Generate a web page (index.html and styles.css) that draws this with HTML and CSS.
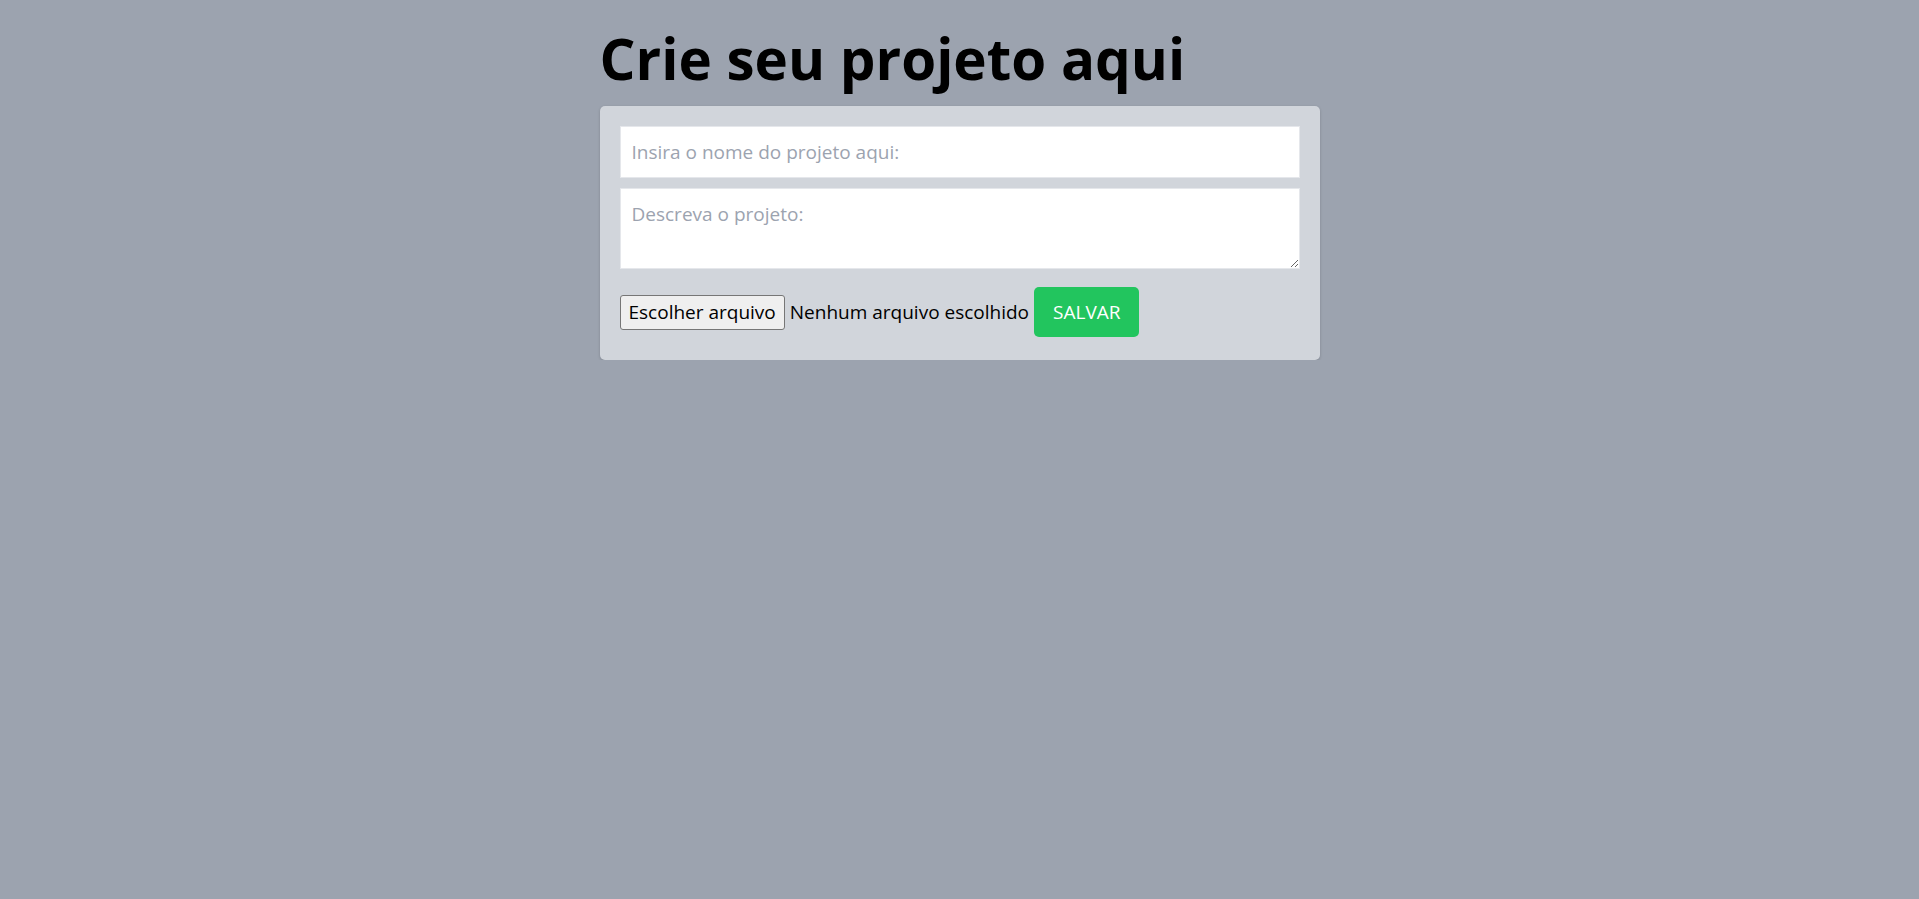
FILE: index.html
```html
<!DOCTYPE html>
<html lang="pt-BR">
<head>
<meta charset="utf-8">
<title>Crie seu projeto aqui</title>
<link rel="stylesheet" href="styles.css">
</head>
<body>
<main class="page">
  <h1 class="title">Crie seu projeto aqui</h1>
  <form class="card">
    <input class="field" type="text" placeholder="Insira o nome do projeto aqui:">
    <textarea class="field area" placeholder="Descreva o projeto:"></textarea>
    <div class="actions">
      <label class="file">
        <span class="file-btn">Escolher arquivo</span>
        <span class="file-name">Nenhum arquivo escolhido</span>
      </label>
      <button class="save" type="button">SALVAR</button>
    </div>
  </form>
</main>
</body>
</html>
```

FILE: styles.css
```css
html, body {
  margin: 0;
  padding: 0;
}

body {
  background: #9ca3af;
  font-family: "Open Sans", "Noto Sans", sans-serif;
  color: #000;
}

.page {
  width: 720px;
  margin: 0 auto;
  padding-top: 31px;
}

.title {
  margin: 0 0 19px;
  font-size: 56.5px;
  line-height: 56px;
  font-weight: 700;
  letter-spacing: 0;
}

.card {
  background: #d1d5db;
  border-radius: 5px;
  padding: 20px 20px 23px;
  box-shadow: 0 1px 3px rgba(0, 0, 0, 0.18);
}

.field {
  display: block;
  width: 100%;
  box-sizing: border-box;
  height: 52px;
  margin: 0;
  padding: 0 11px;
  border: 1px solid #e5e7eb;
  border-radius: 0;
  background: #fff;
  font-family: inherit;
  font-size: 19px;
  color: #111;
  outline: none;
}

.field::placeholder {
  color: #9ca3af;
}

.area {
  margin-top: 10px;
  height: 81px;
  padding: 11px;
  line-height: 28px;
  resize: vertical;
}

.actions {
  display: flex;
  align-items: center;
  margin-top: 18px;
}

.file {
  display: flex;
  align-items: center;
}

.file-btn {
  display: flex;
  align-items: center;
  height: 35px;
  box-sizing: border-box;
  padding: 0 8px;
  background: #efefef;
  border: 1px solid #767676;
  border-radius: 3px;
  font-size: 19px;
  color: #000;
}

.file-name {
  margin-left: 5px;
  font-size: 19px;
  color: #000;
}

.save {
  margin-left: 5px;
  height: 50px;
  padding: 0 19px;
  border: 0;
  border-radius: 5px;
  background: #22c55e;
  color: #fff;
  font-family: inherit;
  font-size: 19px;
  cursor: pointer;
}
```
